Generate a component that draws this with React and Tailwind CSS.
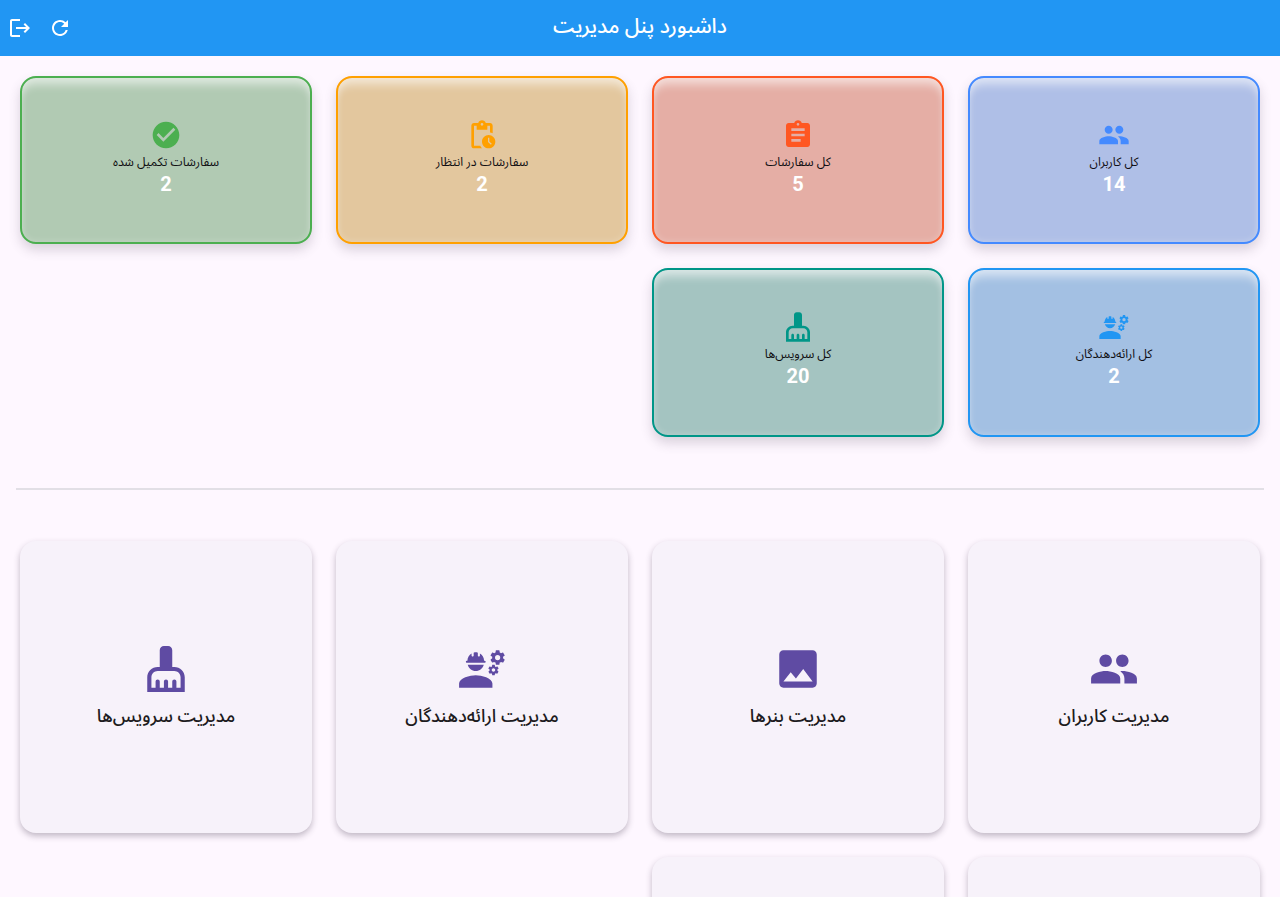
import React from "react";
import { MdLogout, MdRefresh, MdPeople, MdAssignment, MdPendingActions, MdCheckCircle, MdEngineering, MdCleaningServices, MdImage } from "react-icons/md";

const STATS = [
  { label: "کل کاربران", value: "14", Icon: MdPeople, card: "border-[#448AFF] bg-[#AFBFE7]", icon: "text-[#448AFF]" },
  { label: "کل سفارشات", value: "5", Icon: MdAssignment, card: "border-[#FF5722] bg-[#E5AEA5]", icon: "text-[#FF5722]" },
  { label: "سفارشات در انتظار", value: "2", Icon: MdPendingActions, card: "border-[#FFA000] bg-[#E3C79E]", icon: "text-[#FFA000]" },
  { label: "سفارشات تکمیل شده", value: "2", Icon: MdCheckCircle, card: "border-[#4CAF50] bg-[#B1CAB3]", icon: "text-[#4CAF50]" },
  { label: "کل ارائه‌دهندگان", value: "2", Icon: MdEngineering, card: "border-[#2196F3] bg-[#A3C0E3]", icon: "text-[#2196F3]" },
  { label: "کل سرویس‌ها", value: "20", Icon: MdCleaningServices, card: "border-[#009688] bg-[#A4C4C1]", icon: "text-[#009688]" },
];

const MANAGE = [
  { label: "مدیریت کاربران", Icon: MdPeople },
  { label: "مدیریت بنرها", Icon: MdImage },
  { label: "مدیریت ارائه‌دهندگان", Icon: MdEngineering },
  { label: "مدیریت سرویس‌ها", Icon: MdCleaningServices },
  {},
  {},
];

function StatCard({ label, value, Icon, card, icon }) {
  return (
    <div className={`flex h-[168.4px] flex-col items-center justify-center rounded-[16px] border-2 pb-[5px] shadow-[0_6px_12px_rgba(70,60,80,0.2),inset_0_11px_9px_-4px_rgba(255,255,255,0.5),inset_0_0_7px_rgba(255,255,255,0.25)] ${card}`}>
      <Icon size={32} className={icon} />
      <div className="mt-[2px] text-[12.2px] leading-[18px] text-[#0F0E12]">{label}</div>
      <div className="font-['Roboto',sans-serif] text-[20px] font-bold leading-[26px] text-white">{value}</div>
    </div>
  );
}

function ManageCard({ label, Icon }) {
  return (
    <div className="flex h-[292px] flex-col items-center justify-center rounded-[16px] bg-[#F7F2FA] pb-[1px] shadow-[0_3px_6px_rgba(50,35,60,0.3)]">
      {Icon && <Icon size={50} className="text-[#5F4BA3]" />}
      {label && <div className="mt-[9px] text-[18px] font-medium leading-[26px] text-[#1D1B20]">{label}</div>}
    </div>
  );
}

export default function App() {
  return (
    <div dir="rtl" className="h-[897px] overflow-hidden bg-[#FEF7FF] font-['Noto_Sans_Arabic','Noto_Sans','DejaVu_Sans',sans-serif]">
      <header dir="ltr" className="grid h-[56px] grid-cols-[1fr_auto_1fr] items-center bg-[#2196F3] px-2 text-white">
        <div className="flex items-center gap-4">
          <MdLogout size={24} />
          <MdRefresh size={24} />
        </div>
        <h1 dir="rtl" className="pb-[2px] text-[20.7px] font-medium leading-[28px]">داشبورد پنل مدیریت</h1>
        <div />
      </header>
      <main className="px-4">
        <section className="grid grid-cols-4 gap-6 px-1 pt-5">
          {STATS.map((s) => (
            <StatCard key={s.label} {...s} />
          ))}
        </section>
        <hr className="mt-[51.4px] border-t-2 border-[#E2DFE6]" />
        <section className="mt-[50.8px] grid grid-cols-4 gap-6 px-1">
          {MANAGE.map((m, i) => (
            <ManageCard key={i} {...m} />
          ))}
        </section>
      </main>
    </div>
  );
}
